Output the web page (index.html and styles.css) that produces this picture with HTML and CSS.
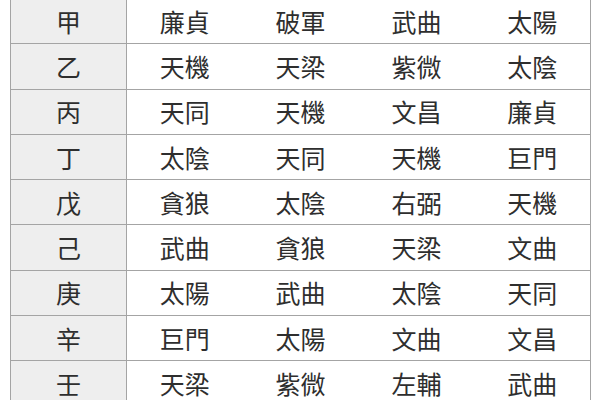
FILE: index.html
```html
<!DOCTYPE html>
<html lang="zh-Hant">
<head>
<meta charset="utf-8">
<link rel="stylesheet" href="styles.css">
</head>
<body>
<div class="page">
<table class="sihua">
<tbody>
<tr><th>甲</th><td>廉貞</td><td>破軍</td><td>武曲</td><td>太陽</td></tr>
<tr><th>乙</th><td>天機</td><td>天梁</td><td>紫微</td><td>太陰</td></tr>
<tr><th>丙</th><td>天同</td><td>天機</td><td>文昌</td><td>廉貞</td></tr>
<tr><th>丁</th><td>太陰</td><td>天同</td><td>天機</td><td>巨門</td></tr>
<tr><th>戊</th><td>貪狼</td><td>太陰</td><td>右弼</td><td>天機</td></tr>
<tr><th>己</th><td>武曲</td><td>貪狼</td><td>天梁</td><td>文曲</td></tr>
<tr><th>庚</th><td>太陽</td><td>武曲</td><td>太陰</td><td>天同</td></tr>
<tr><th>辛</th><td>巨門</td><td>太陽</td><td>文曲</td><td>文昌</td></tr>
<tr><th>壬</th><td>天梁</td><td>紫微</td><td>左輔</td><td>武曲</td></tr>
</tbody>
</table>
</div>
</body>
</html>
```
FILE: styles.css
```css
html, body {
  margin: 0;
  padding: 0;
  background: #ffffff;
  overflow: hidden;
}
.page {
  width: 600px;
  height: 400px;
  overflow: hidden;
  padding-left: 10px;
  box-sizing: border-box;
}
.sihua {
  border-collapse: collapse;
  table-layout: fixed;
  width: 581px;
  margin-top: -2px;
  font-family: "Noto Sans CJK TC", "Noto Sans CJK SC", sans-serif;
  font-size: 25px;
  color: #2e2e2e;
}
.sihua th,
.sihua td {
  height: 44.3px;
  padding: 0;
  text-align: center;
  vertical-align: middle;
  font-weight: 400;
  border-top: 1.5px solid #a4a4a4;
  border-bottom: 1.5px solid #a4a4a4;
  line-height: 1;
}
.sihua th {
  width: 115px;
  background: #eeeeee;
  border-left: 1.5px solid #a4a4a4;
  border-right: 1.5px solid #a4a4a4;
}
.sihua td:last-child {
  border-right: 1.5px solid #a4a4a4;
}
```
